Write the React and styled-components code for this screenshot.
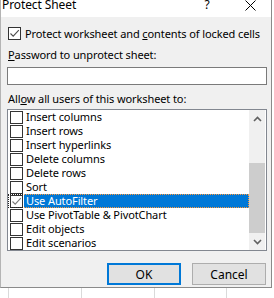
import React from "react";
import styled, { createGlobalStyle } from "styled-components";

const GlobalStyle = createGlobalStyle`
  html, body {
    margin: 0;
    padding: 0;
    background: #fff;
  }
  body {
    font-family: "Noto Sans", "Open Sans", sans-serif;
    font-size: 11px;
    letter-spacing: -0.1px;
    color: #000;
  }
`;

const Page = styled.div`
  width: 274px;
  height: 298px;
  overflow: hidden;
  background: #fff;
`;

const Dialog = styled.div`
  box-sizing: border-box;
  width: 272px;
  height: 288px;
  background: #f0f0f0;
  border-left: 1px solid #b4b4b4;
  border-right: 1px solid #8a8a8a;
  border-bottom: 1px solid #8a8a8a;
  display: flex;
  flex-direction: column;
`;

const TitleBar = styled.div`
  height: 17px;
  background: #fff;
  display: flex;
  align-items: flex-start;
  overflow: hidden;
`;

const Title = styled.div`
  flex: 1;
  margin-top: -2px;
  padding-left: 1px;
  font-size: 12px;
  line-height: 14px;
  white-space: nowrap;
`;

const TitleButton = styled.div`
  width: ${(p) => p.w}px;
  height: 14px;
  margin-top: -2px;
  display: flex;
  justify-content: center;
  align-items: center;
  font-size: 12px;
  line-height: 14px;
`;

const Body = styled.div`
  padding: 10px 4px 0 6px;
  display: flex;
  flex-direction: column;
`;

const CheckRow = styled.label`
  display: flex;
  align-items: center;
  gap: 4px;
  height: 13px;
  margin-left: 1px;
  line-height: 14px;
  white-space: nowrap;
`;

const Box = styled.span`
  box-sizing: border-box;
  width: 13px;
  height: 13px;
  flex: none;
  background: #fff;
  border: 1px solid #333;
  display: flex;
  align-items: center;
  justify-content: center;
`;

const FieldLabel = styled.div`
  margin-top: ${(p) => p.top}px;
  margin-left: 1px;
  line-height: 14px;
  white-space: nowrap;
`;

const TextBox = styled.div`
  box-sizing: border-box;
  margin-top: 5px;
  width: 260px;
  height: 18px;
  background: #fff;
  border: 1px solid #7a7a7a;
`;

const ListBox = styled.div`
  box-sizing: border-box;
  margin-top: 3px;
  width: 260px;
  height: 142px;
  background: #fff;
  border: 1px solid #828790;
  display: flex;
`;

const Items = styled.div`
  flex: 1;
  display: flex;
  flex-direction: column;
`;

const Item = styled.div`
  height: 14px;
  display: flex;
  align-items: center;
  padding-left: 2px;
  line-height: 14px;
  outline: ${(p) => (p.focused ? "1px dotted #222" : "none")};
  outline-offset: -1px;
`;

const ItemText = styled.span`
  position: relative;
  z-index: 1;
  box-sizing: border-box;
  flex: 1;
  height: 14px;
  margin-left: 1px;
  padding-left: 2px;
  white-space: nowrap;
  background: ${(p) => (p.selected ? "#0078d7" : "transparent")};
  color: ${(p) => (p.selected ? "#fff" : "#000")};
  border: 1px dotted ${(p) => (p.selected ? "#ff9a3c" : "transparent")};
  border-left: none;
  line-height: 12px;
`;

const ScrollBar = styled.div`
  width: 16px;
  margin-right: 1px;
  background: #f0f0f0;
  display: flex;
  flex-direction: column;
`;

const Arrow = styled.div`
  height: 17px;
  display: flex;
  align-items: center;
  justify-content: center;
`;

const Track = styled.div`
  flex: 1;
`;

const Thumb = styled.div`
  margin-top: 36px;
  height: 70px;
  background: #cdcdcd;
`;

const Buttons = styled.div`
  margin-top: 12px;
  display: flex;
  justify-content: flex-end;
  gap: 11px;
  padding-right: 1px;
`;

const Button = styled.button`
  box-sizing: border-box;
  width: 74px;
  height: 22px;
  padding: 0;
  font: inherit;
  font-size: 12px;
  color: #000;
  background: #e1e1e1;
  border: ${(p) => (p.primary ? "2px solid #0078d7" : "1px solid #adadad")};
`;

const Sheet = styled.div`
  height: 10px;
  display: flex;
`;

const Cell = styled.div`
  width: ${(p) => p.w}px;
  flex: none;
  border-right: 1px solid #dadada;
`;

const Tick = ({ color }) => (
  <svg width="11" height="11" viewBox="0 0 11 11">
    <path d="M1.5 5.5 L4.2 8.2 L9.8 2.2" fill="none" stroke={color} strokeWidth="1.1" />
  </svg>
);

const Check = ({ checked, color = "#4d4d4d" }) => (
  <Box>{checked && <Tick color={color} />}</Box>
);

const Chevron = ({ up }) => (
  <svg width="9" height="6" viewBox="0 0 9 6">
    <path
      d={up ? "M1 5 L4.5 1.5 L8 5" : "M1 1 L4.5 4.5 L8 1"}
      fill="none"
      stroke="#606060"
      strokeWidth="1.6"
    />
  </svg>
);

const items = [
  { text: "Insert columns" },
  { text: "Insert rows" },
  { text: "Insert hyperlinks" },
  { text: "Delete columns" },
  { text: "Delete rows" },
  { text: "Sort" },
  { text: "Use AutoFilter", checked: true, selected: true },
  { text: "Use PivotTable & PivotChart" },
  { text: "Edit objects" },
  { text: "Edit scenarios" },
];

const App = () => {
  return (
    <Page>
      <GlobalStyle />
      <Dialog>
        <TitleBar>
          <Title>Protect Sheet</Title>
          <TitleButton w={44}>?</TitleButton>
          <TitleButton w={42}>
            <svg width="11" height="11" viewBox="0 0 11 11">
              <path d="M0.5 0.5 L10.5 10.5 M10.5 0.5 L0.5 10.5" stroke="#000" strokeWidth="1" />
            </svg>
          </TitleButton>
        </TitleBar>
        <Body>
          <CheckRow>
            <Check checked />
            <span>
              Protect worksheet and <u>c</u>ontents of locked cells
            </span>
          </CheckRow>
          <FieldLabel top={8}>
            <u>P</u>assword to unprotect sheet:
          </FieldLabel>
          <TextBox />
          <FieldLabel top={7}>
            All<u>o</u>w all users of this worksheet to:
          </FieldLabel>
          <ListBox>
            <Items>
              {items.map((it) => (
                <Item key={it.text} focused={it.selected}>
                  <Check checked={it.checked} color="#7a7a7a" />
                  <ItemText selected={it.selected}>{it.text}</ItemText>
                </Item>
              ))}
            </Items>
            <ScrollBar>
              <Arrow>
                <Chevron up />
              </Arrow>
              <Track>
                <Thumb />
              </Track>
              <Arrow>
                <Chevron />
              </Arrow>
            </ScrollBar>
          </ListBox>
          <Buttons>
            <Button primary>OK</Button>
            <Button>Cancel</Button>
          </Buttons>
        </Body>
      </Dialog>
      <Sheet>
        <Cell w={8} />
        <Cell w={72} />
        <Cell w={72} />
        <Cell w={71} />
      </Sheet>
    </Page>
  );
};

export default App;
